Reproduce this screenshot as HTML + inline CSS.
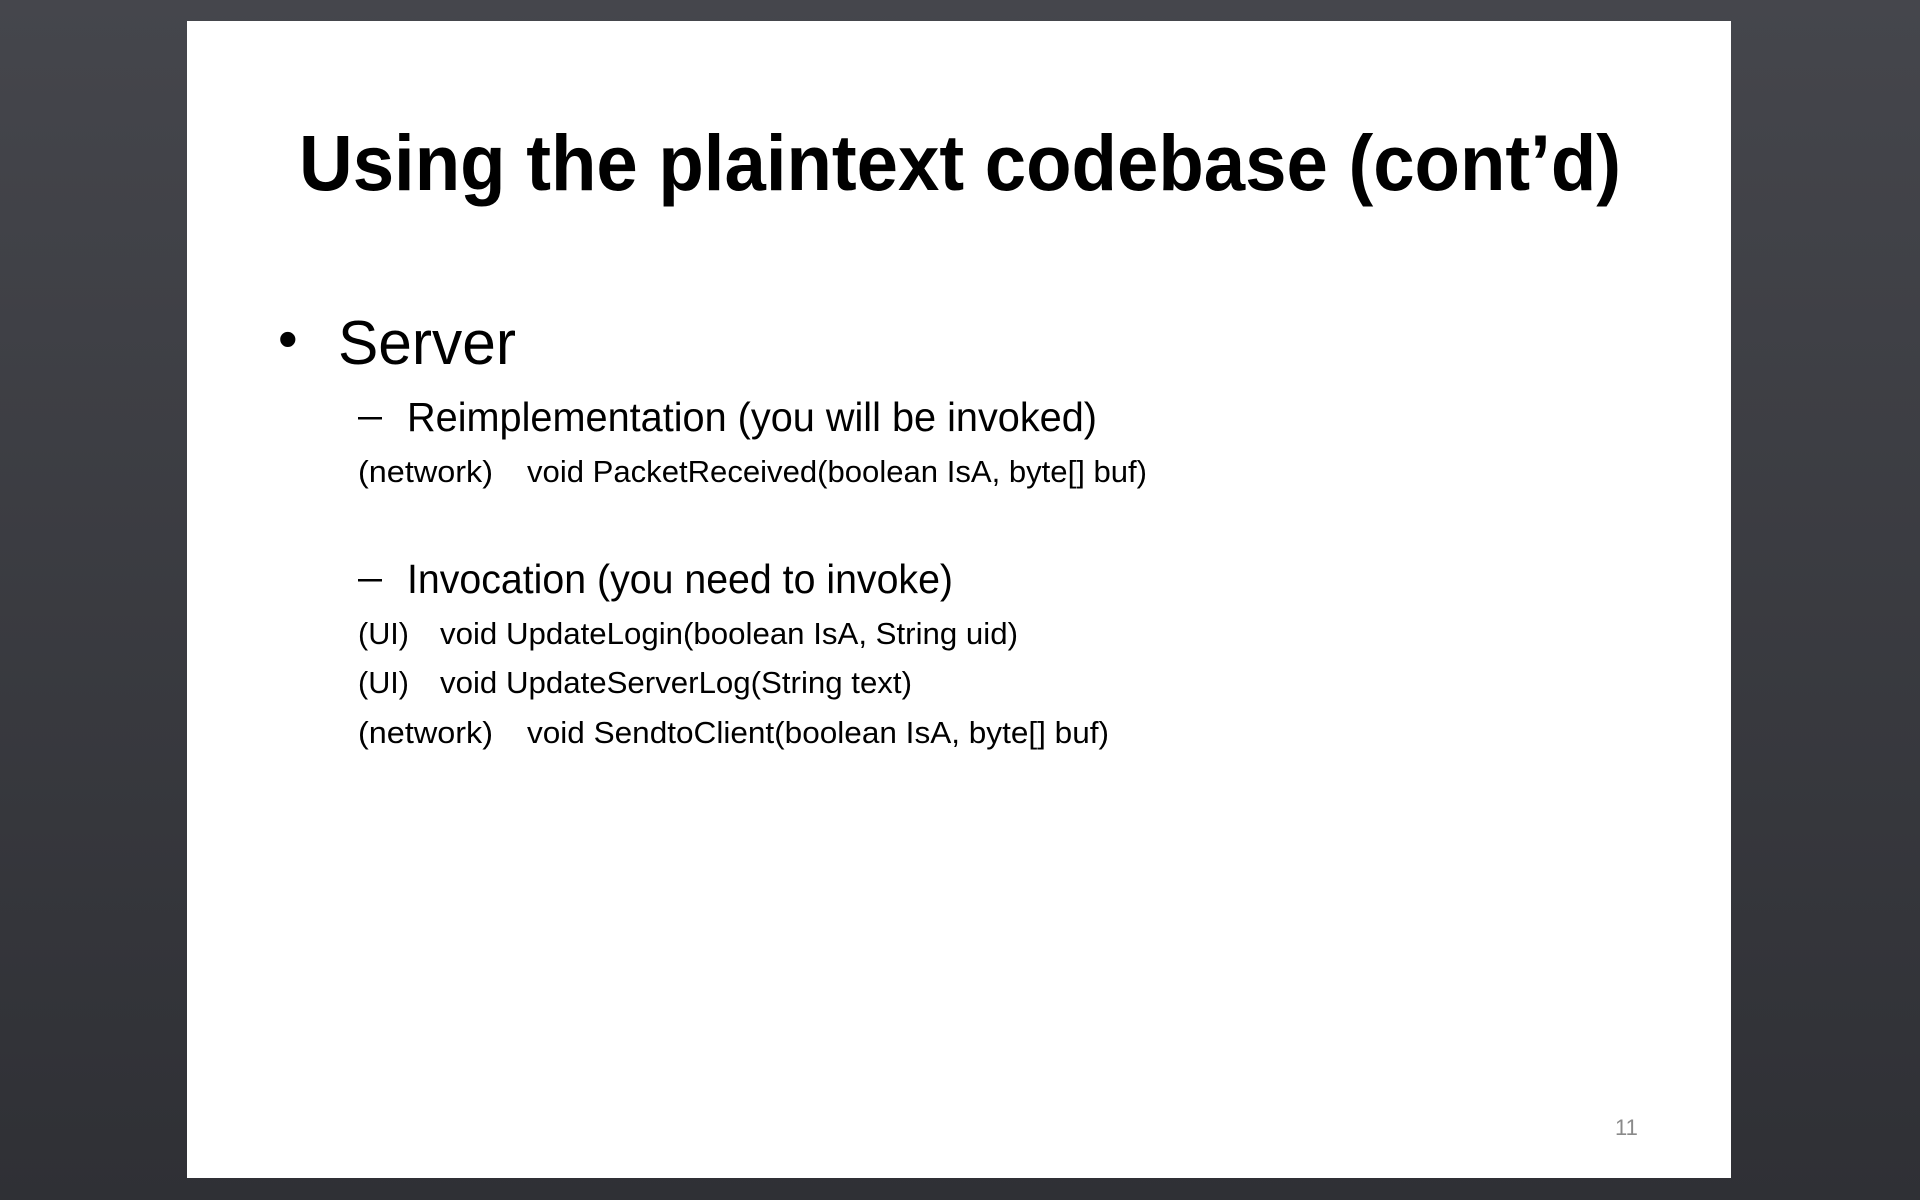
<!DOCTYPE html>
<html><head><meta charset="utf-8"><style>
html,body{margin:0;padding:0;width:1920px;height:1200px;overflow:hidden;background:linear-gradient(#45464c,#2f3035);}
svg{position:absolute;left:0;top:0}
text{font-family:"Liberation Sans",sans-serif;fill:#000}
</style></head><body>
<svg width="1920" height="1200" viewBox="0 0 1920 1200">
<rect x="187" y="21" width="1544" height="1157" fill="#fff"/>
<text x="299" y="190" font-size="79" font-weight="bold" textLength="1322" lengthAdjust="spacingAndGlyphs">Using the plaintext codebase (cont’d)</text>
<text x="278" y="358" font-size="56">•</text>
<text x="338" y="364" font-size="62" textLength="178" lengthAdjust="spacingAndGlyphs">Server</text>
<rect x="358" y="417" width="24" height="2.5" fill="#000"/>
<text x="407" y="431" font-size="41" textLength="690" lengthAdjust="spacingAndGlyphs">Reimplementation (you will be invoked)</text>
<text x="358" y="482" font-size="31" textLength="135" lengthAdjust="spacingAndGlyphs">(network)</text>
<text x="527" y="482" font-size="31" textLength="620" lengthAdjust="spacingAndGlyphs">void PacketReceived(boolean IsA, byte[] buf)</text>
<rect x="358" y="579" width="24" height="2.5" fill="#000"/>
<text x="407" y="593" font-size="41" textLength="546" lengthAdjust="spacingAndGlyphs">Invocation (you need to invoke)</text>
<text x="358" y="644" font-size="31" textLength="51" lengthAdjust="spacingAndGlyphs">(UI)</text>
<text x="440" y="644" font-size="31" textLength="578" lengthAdjust="spacingAndGlyphs">void UpdateLogin(boolean IsA, String uid)</text>
<text x="358" y="693" font-size="31" textLength="51" lengthAdjust="spacingAndGlyphs">(UI)</text>
<text x="440" y="693" font-size="31" textLength="472" lengthAdjust="spacingAndGlyphs">void UpdateServerLog(String text)</text>
<text x="358" y="743" font-size="31" textLength="135" lengthAdjust="spacingAndGlyphs">(network)</text>
<text x="527" y="743" font-size="31" textLength="582" lengthAdjust="spacingAndGlyphs">void SendtoClient(boolean IsA, byte[] buf)</text>
<text x="1615" y="1135" font-size="22" fill="#888" style="fill:#8a8a8a">11</text>
</svg>
</body></html>
